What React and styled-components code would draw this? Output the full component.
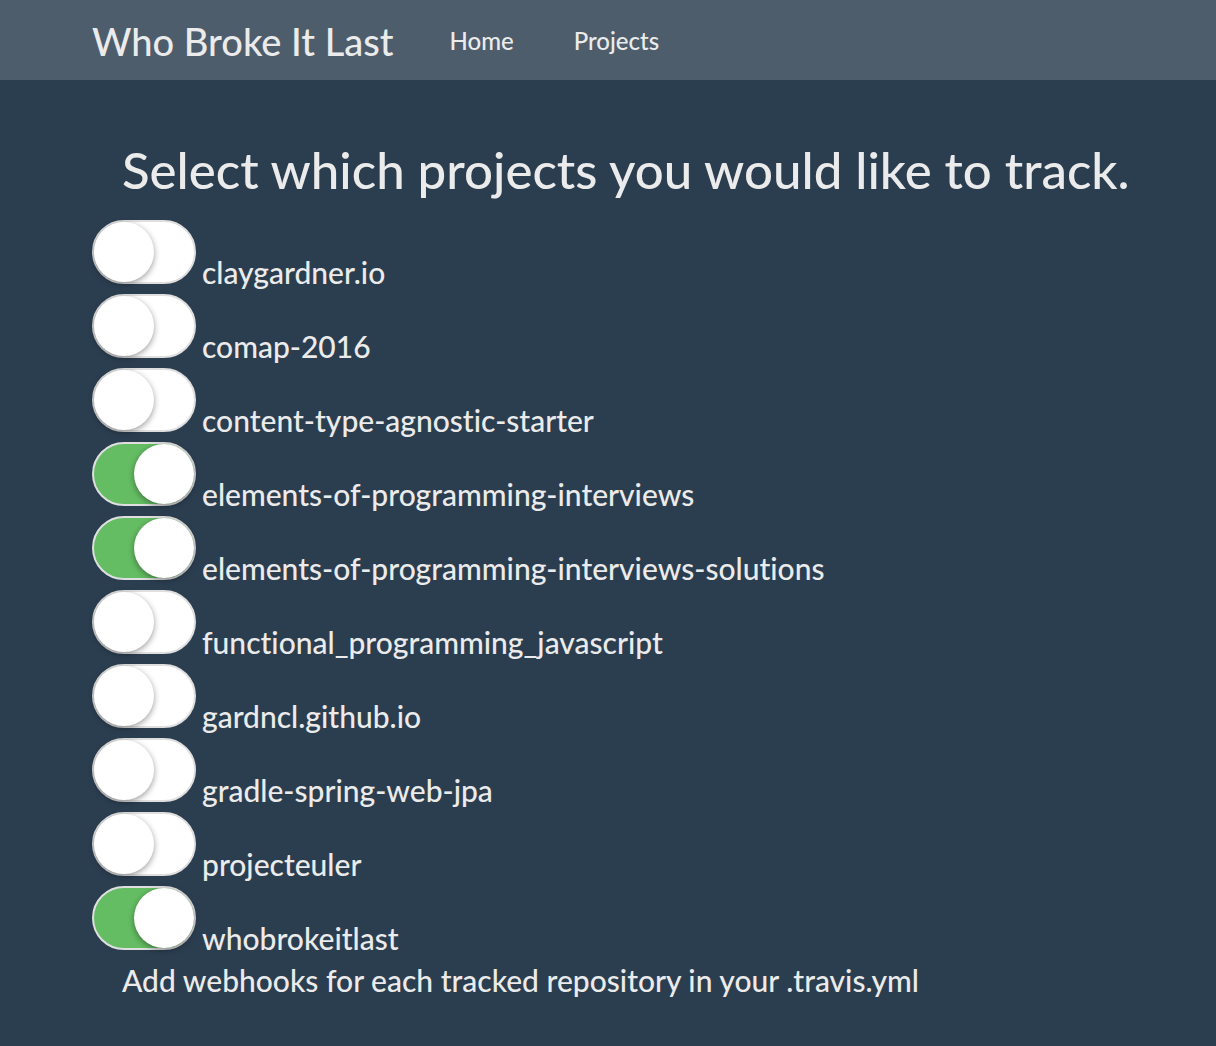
import React, { useState } from "react";
import styled, { createGlobalStyle } from "styled-components";

const GlobalStyle = createGlobalStyle`
  *, *::before, *::after { box-sizing: border-box; }
  body {
    margin: 0;
    background: #2b3e50;
    color: #ebebeb;
    font-family: Lato, "Liberation Sans", sans-serif;
    font-size: 30px;
    font-weight: 500;
    font-variant-ligatures: none;
    line-height: 40px;
  }
`;

const Navbar = styled.nav`
  display: flex;
  align-items: center;
  height: 80px;
  padding: 0 92px;
  background: #4e5d6c;
`;

const Brand = styled.a`
  margin-right: 26px;
  padding-top: 2px;
  color: #ebebeb;
  font-size: 38px;
  line-height: 40px;
  text-decoration: none;
`;

const NavLink = styled.a`
  padding: 2px 30px 0;
  color: #ebebeb;
  font-size: 24px;
  line-height: 40px;
  text-decoration: none;
`;

const Main = styled.main`
  padding: 60px 62px 40px 92px;
`;

const Title = styled.h1`
  margin: 0 0 20px;
  padding-left: 30px;
  font-size: 51px;
  font-weight: 500;
  line-height: 60px;
`;

const ProjectList = styled.ul`
  display: flex;
  flex-direction: column;
  gap: 10px;
  margin: 0;
  padding: 0;
  list-style: none;
`;

const ProjectLabel = styled.label`
  display: flex;
  align-items: flex-end;
  gap: 6px;
  height: 64px;
  cursor: pointer;
`;

const Switch = styled.input`
  appearance: none;
  display: flex;
  flex: none;
  width: 104px;
  height: 64px;
  margin: 0;
  border: 2px solid #dfdfdf;
  border-radius: 32px;
  background: #ffffff;
  cursor: pointer;

  &::before {
    content: "";
    width: 60px;
    height: 60px;
    border-radius: 50%;
    background: #ffffff;
    box-shadow: 0 2px 6px rgba(0, 0, 0, 0.4);
  }

  &:checked {
    justify-content: flex-end;
    background: #64bd63;
  }
`;

const ProjectName = styled.span`
  line-height: 24px;
`;

const Hint = styled.p`
  margin: 10px 0 0;
  padding-left: 30px;
`;

const projects = [
  { name: "claygardner.io", tracked: false },
  { name: "comap-2016", tracked: false },
  { name: "content-type-agnostic-starter", tracked: false },
  { name: "elements-of-programming-interviews", tracked: true },
  { name: "elements-of-programming-interviews-solutions", tracked: true },
  { name: "functional_programming_javascript", tracked: false },
  { name: "gardncl.github.io", tracked: false },
  { name: "gradle-spring-web-jpa", tracked: false },
  { name: "projecteuler", tracked: false },
  { name: "whobrokeitlast", tracked: true },
];

function Project({ name, tracked }) {
  const [on, setOn] = useState(tracked);
  return (
    <li>
      <ProjectLabel>
        <Switch type="checkbox" checked={on} onChange={() => setOn(!on)} />
        <ProjectName>{name}</ProjectName>
      </ProjectLabel>
    </li>
  );
}

export default function App() {
  return (
    <>
      <GlobalStyle />
      <Navbar>
        <Brand href="#">Who Broke It Last</Brand>
        <NavLink href="#home">Home</NavLink>
        <NavLink href="#projects">Projects</NavLink>
      </Navbar>
      <Main>
        <Title>Select which projects you would like to track.</Title>
        <ProjectList>
          {projects.map((project) => (
            <Project key={project.name} {...project} />
          ))}
        </ProjectList>
        <Hint>Add webhooks for each tracked repository in your .travis.yml</Hint>
      </Main>
    </>
  );
}
